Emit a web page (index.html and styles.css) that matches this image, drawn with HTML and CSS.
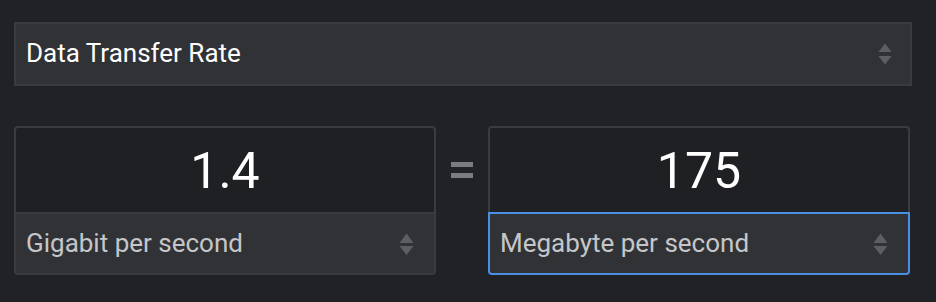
FILE: index.html
```html
<!DOCTYPE html>
<html lang="en">
<head>
<meta charset="utf-8">
<title>Data Transfer Rate Converter</title>
<link rel="stylesheet" href="styles.css">
</head>
<body>
<div class="converter">
  <div class="select select-top">
    <span class="select-label">Data Transfer Rate</span>
    <svg class="arrows" width="14" height="22" viewBox="0 0 14 22"><polygon points="0.5,9 7,0.5 13.5,9"/><polygon points="0.5,13 13.5,13 7,21.5"/></svg>
  </div>
  <div class="row">
    <div class="unit-box">
      <div class="value">1.4</div>
      <div class="select select-unit">
        <span class="select-label">Gigabit per second</span>
        <svg class="arrows" width="15" height="22" viewBox="0 0 15 22"><polygon points="0.5,10 7.5,0.5 14.5,10"/><polygon points="0.5,13 14.5,13 7.5,22"/></svg>
      </div>
    </div>
    <div class="equals" aria-label="equals">
      <svg width="22" height="16" viewBox="0 0 22 16"><rect x="0" y="0" width="22" height="5"/><rect x="0" y="11" width="22" height="5"/></svg>
    </div>
    <div class="unit-box">
      <div class="value">175</div>
      <div class="select select-unit focused">
        <span class="select-label">Megabyte per second</span>
        <svg class="arrows" width="15" height="22" viewBox="0 0 15 22"><polygon points="0.5,10 7.5,0.5 14.5,10"/><polygon points="0.5,13 14.5,13 7.5,22"/></svg>
      </div>
    </div>
  </div>
</div>
</body>
</html>
```
FILE: styles.css
```css
html, body {
  margin: 0;
  padding: 0;
  background: #212226;
  font-family: Roboto, "Liberation Sans", sans-serif;
}

.converter {
  padding: 22px 24px 0 14px;
  display: flex;
  flex-direction: column;
}

.select {
  display: flex;
  align-items: center;
  justify-content: space-between;
  background: #313236;
  box-sizing: border-box;
}

.select-top {
  height: 64px;
  border: 2px solid #3a3b3f;
  padding: 0 18px 0 10px;
}

.select-top .select-label {
  color: #ffffff;
  font-size: 26px;
  margin-top: -3px;
}

.arrows {
  fill: #5d5e62;
  display: block;
}

.row {
  display: flex;
  margin-top: 40px;
  margin-right: 2px;
  gap: 15px;
}

.unit-box {
  flex: 1;
  display: flex;
  flex-direction: column;
}

.value {
  height: 86px;
  display: flex;
  align-items: center;
  justify-content: center;
  color: #ffffff;
  font-size: 50px;
  padding-top: 2px;
  box-sizing: border-box;
  background: #1f2024;
  border: 2px solid #3a3b3f;
  border-bottom: 0;
  border-radius: 4px 4px 0 0;
}

.select-unit {
  height: 63px;
  padding: 0 20px 0 10px;
  border: 2px solid #3a3b3f;
  border-radius: 0 0 4px 4px;
}

.select-unit .select-label {
  color: #c5c6c9;
  font-size: 26px;
  margin-top: -2px;
}

.select-unit.focused {
  border-color: #4a8fe6;
}

.equals {
  width: 22px;
  height: 86px;
  display: flex;
  align-items: center;
  fill: #7b7c7f;
  padding-top: 2px;
  box-sizing: border-box;
}

.equals svg {
  display: block;
}
```
